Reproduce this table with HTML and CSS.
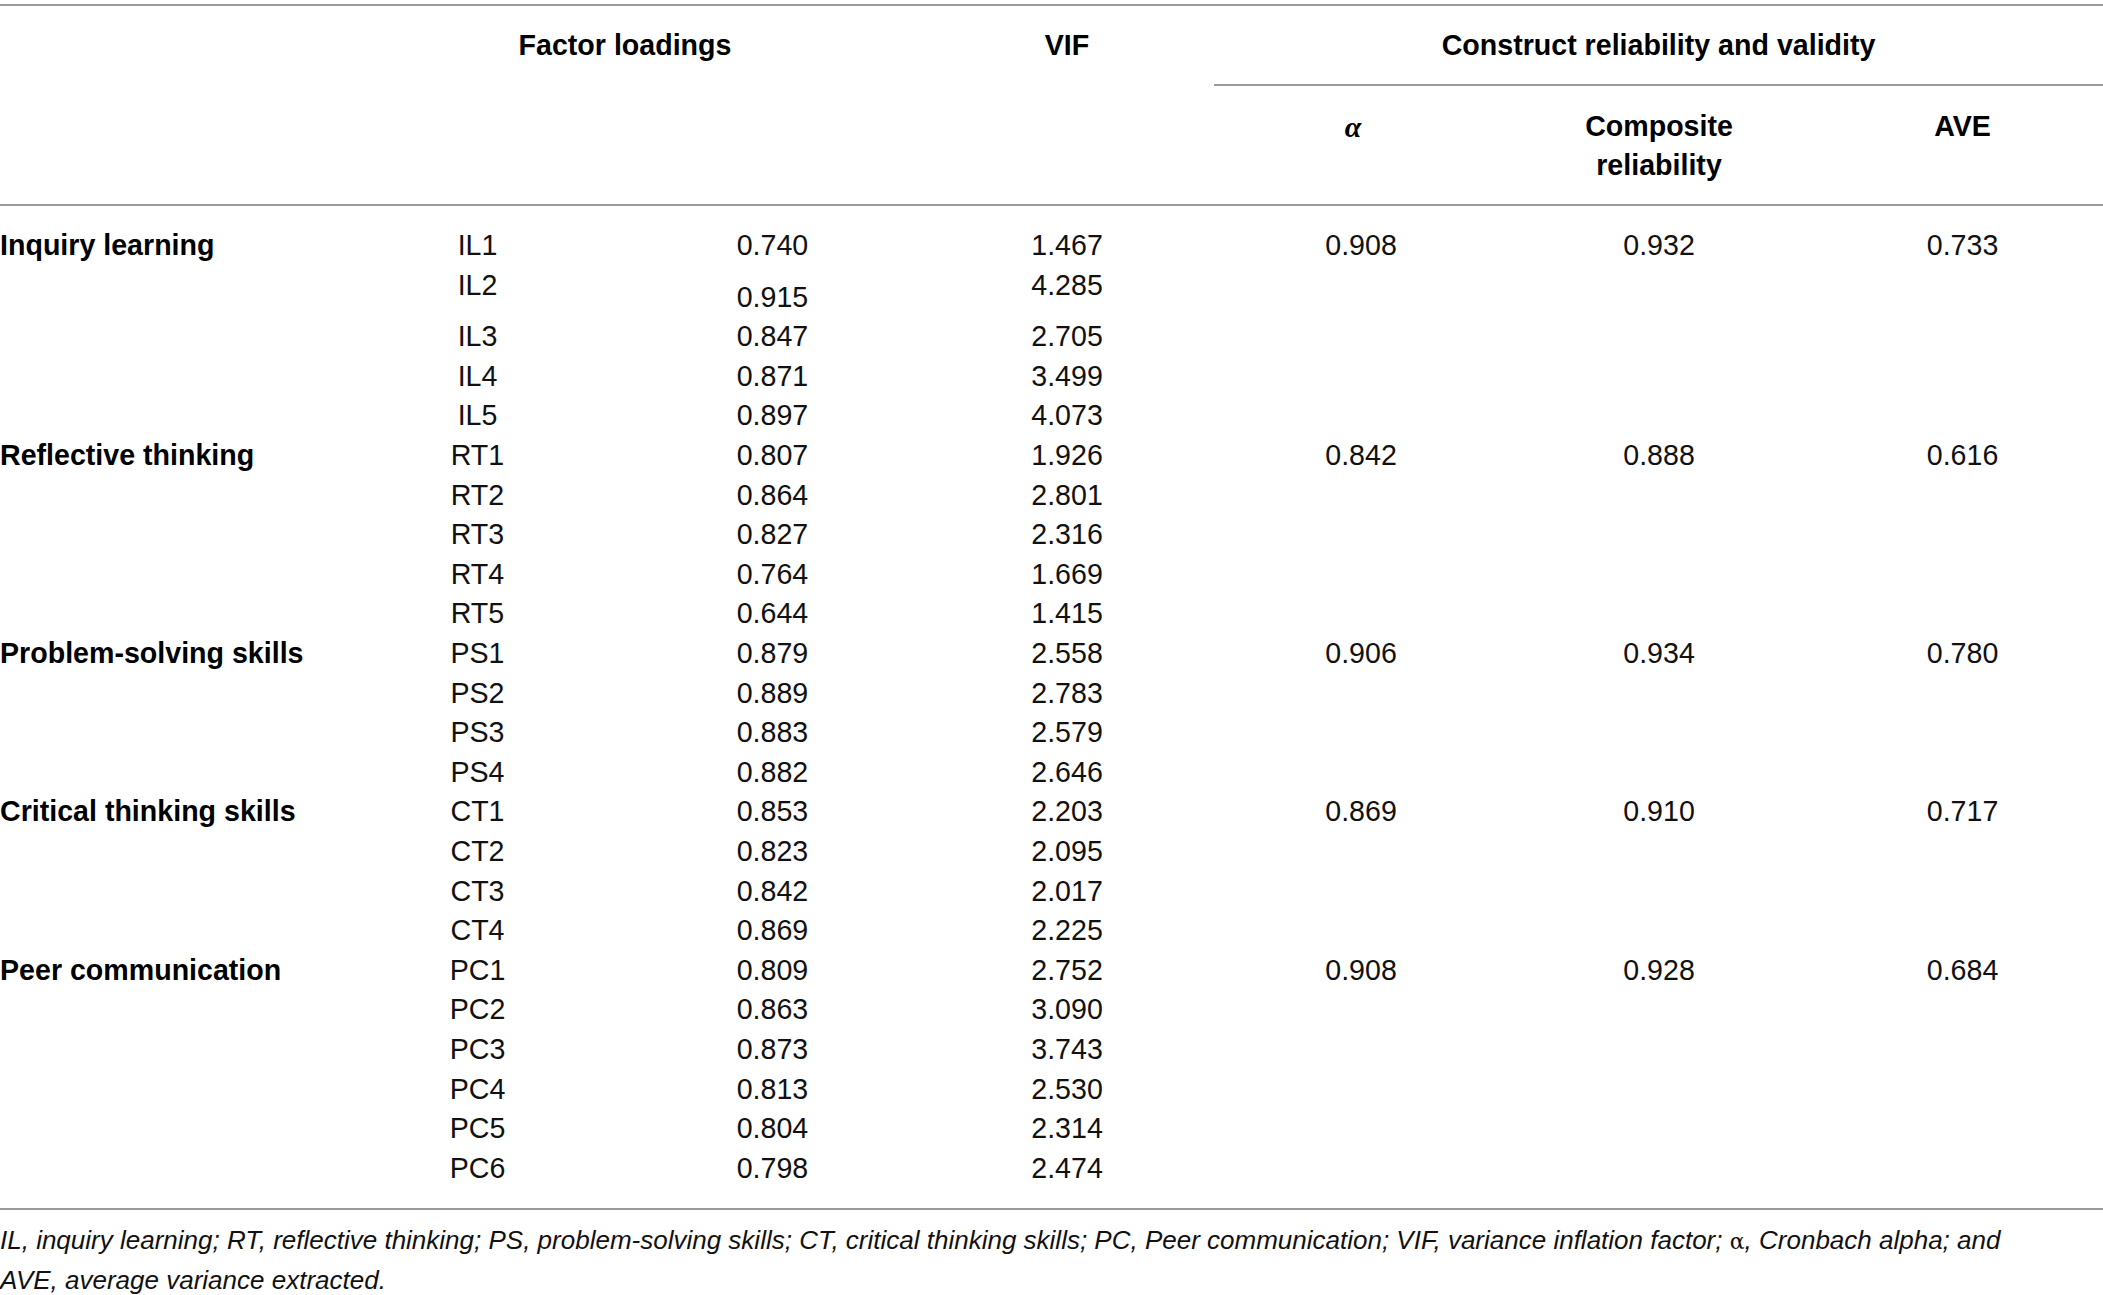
FILE: index.html
```html
<!DOCTYPE html>
<html lang="en">
<head>
<meta charset="utf-8">
<title>Measurement model</title>
<link rel="stylesheet" href="styles.css">
</head>
<body>
<div class="page">
<table class="tbl">
  <colgroup>
    <col class="c-label">
    <col class="c-item">
    <col class="c-load">
    <col class="c-vif">
    <col class="c-alpha">
    <col class="c-cr">
    <col class="c-ave">
  </colgroup>
  <thead>
    <tr class="h1">
      <th></th>
      <th colspan="2" rowspan="2" class="hd">Factor loadings</th>
      <th rowspan="2" class="hd">VIF</th>
      <th colspan="3" class="hd group">Construct reliability and validity</th>
    </tr>
    <tr class="h2">
      <th></th>
      <th class="hd2"><span class="alpha">α</span></th>
      <th class="hd2">Composite<br>reliability</th>
      <th class="hd2 ave">AVE</th>
    </tr>
  </thead>
  <tbody>
    <tr class="first"><td class="lbl">Inquiry learning</td><td>IL1</td><td>0.740</td><td>1.467</td><td>0.908</td><td>0.932</td><td class="ave">0.733</td></tr>
    <tr class="tall"><td></td><td>IL2</td><td class="drop">0.915</td><td>4.285</td><td></td><td></td><td class="ave"></td></tr>
    <tr><td></td><td>IL3</td><td>0.847</td><td>2.705</td><td></td><td></td><td class="ave"></td></tr>
    <tr><td></td><td>IL4</td><td>0.871</td><td>3.499</td><td></td><td></td><td class="ave"></td></tr>
    <tr><td></td><td>IL5</td><td>0.897</td><td>4.073</td><td></td><td></td><td class="ave"></td></tr>
    <tr><td class="lbl">Reflective thinking</td><td>RT1</td><td>0.807</td><td>1.926</td><td>0.842</td><td>0.888</td><td class="ave">0.616</td></tr>
    <tr><td></td><td>RT2</td><td>0.864</td><td>2.801</td><td></td><td></td><td class="ave"></td></tr>
    <tr><td></td><td>RT3</td><td>0.827</td><td>2.316</td><td></td><td></td><td class="ave"></td></tr>
    <tr><td></td><td>RT4</td><td>0.764</td><td>1.669</td><td></td><td></td><td class="ave"></td></tr>
    <tr><td></td><td>RT5</td><td>0.644</td><td>1.415</td><td></td><td></td><td class="ave"></td></tr>
    <tr><td class="lbl">Problem-solving skills</td><td>PS1</td><td>0.879</td><td>2.558</td><td>0.906</td><td>0.934</td><td class="ave">0.780</td></tr>
    <tr><td></td><td>PS2</td><td>0.889</td><td>2.783</td><td></td><td></td><td class="ave"></td></tr>
    <tr><td></td><td>PS3</td><td>0.883</td><td>2.579</td><td></td><td></td><td class="ave"></td></tr>
    <tr><td></td><td>PS4</td><td>0.882</td><td>2.646</td><td></td><td></td><td class="ave"></td></tr>
    <tr><td class="lbl">Critical thinking skills</td><td>CT1</td><td>0.853</td><td>2.203</td><td>0.869</td><td>0.910</td><td class="ave">0.717</td></tr>
    <tr><td></td><td>CT2</td><td>0.823</td><td>2.095</td><td></td><td></td><td class="ave"></td></tr>
    <tr><td></td><td>CT3</td><td>0.842</td><td>2.017</td><td></td><td></td><td class="ave"></td></tr>
    <tr><td></td><td>CT4</td><td>0.869</td><td>2.225</td><td></td><td></td><td class="ave"></td></tr>
    <tr><td class="lbl">Peer communication</td><td>PC1</td><td>0.809</td><td>2.752</td><td>0.908</td><td>0.928</td><td class="ave">0.684</td></tr>
    <tr><td></td><td>PC2</td><td>0.863</td><td>3.090</td><td></td><td></td><td class="ave"></td></tr>
    <tr><td></td><td>PC3</td><td>0.873</td><td>3.743</td><td></td><td></td><td class="ave"></td></tr>
    <tr><td></td><td>PC4</td><td>0.813</td><td>2.530</td><td></td><td></td><td class="ave"></td></tr>
    <tr><td></td><td>PC5</td><td>0.804</td><td>2.314</td><td></td><td></td><td class="ave"></td></tr>
    <tr class="last"><td></td><td>PC6</td><td>0.798</td><td>2.474</td><td></td><td></td><td class="ave"></td></tr>
  </tbody>
</table>
<p class="note">IL, inquiry learning; RT, reflective thinking; PS, problem-solving skills; CT, critical thinking skills; PC, Peer communication; VIF, variance inflation factor; <span class="galpha">α</span>, Cronbach alpha; and<br>AVE, average variance extracted.</p>
</div>
</body>
</html>
```

FILE: styles.css
```css
html, body {
  margin: 0;
  padding: 0;
  background: #ffffff;
}

.page {
  padding-top: 4px;
  font-family: "Liberation Sans", Arial, Helvetica, sans-serif;
  color: #111;
  font-size: 28.6px;
}

.tbl {
  width: 2103px;
  border-collapse: collapse;
  table-layout: fixed;
  border-top: 2px solid #9a9a9a;
  border-bottom: 2px solid #9a9a9a;
}

.c-label { width: 330px; }
.c-item  { width: 295px; }
.c-load  { width: 295px; }
.c-vif   { width: 294px; }
.c-alpha { width: 294px; }
.c-cr    { width: 302px; }
.c-ave   { width: 293px; }

.tbl th,
.tbl td {
  padding: 0;
  text-align: center;
  vertical-align: top;
  line-height: 39.6px;
  white-space: nowrap;
}

.tbl thead th {
  font-weight: 700;
  color: #000;
}

.h1 th {
  padding-top: 19.5px;
  padding-bottom: 18.5px;
}

.h1 th.group {
  border-bottom: 2px solid #9a9a9a;
}

.h2 th {
  padding-top: 21px;
  padding-bottom: 19px;
  line-height: 39px;
}

.tbl thead {
  border-bottom: 2px solid #9a9a9a;
}

.alpha {
  font-family: "Liberation Serif", "Times New Roman", serif;
  font-style: italic;
  font-weight: 700;
  font-size: 30px;
  position: relative;
  left: -8px;
}

.ave {
  padding-left: 12px !important;
}

.tbl td.lbl {
  text-align: left;
  font-weight: 700;
  color: #000;
}

.tbl tr.first td {
  padding-top: 20.5px;
}

.tbl tr.last td {
  padding-bottom: 19.5px;
}

.tbl td.drop {
  padding-top: 12px;
}

.note {
  margin: 11px 0 0 0;
  font-style: italic;
  font-size: 26px;
  line-height: 39px;
  color: #111;
}

.galpha {
  font-family: "DejaVu Serif", serif;
  font-style: normal;
  font-size: 22px;
}
```
